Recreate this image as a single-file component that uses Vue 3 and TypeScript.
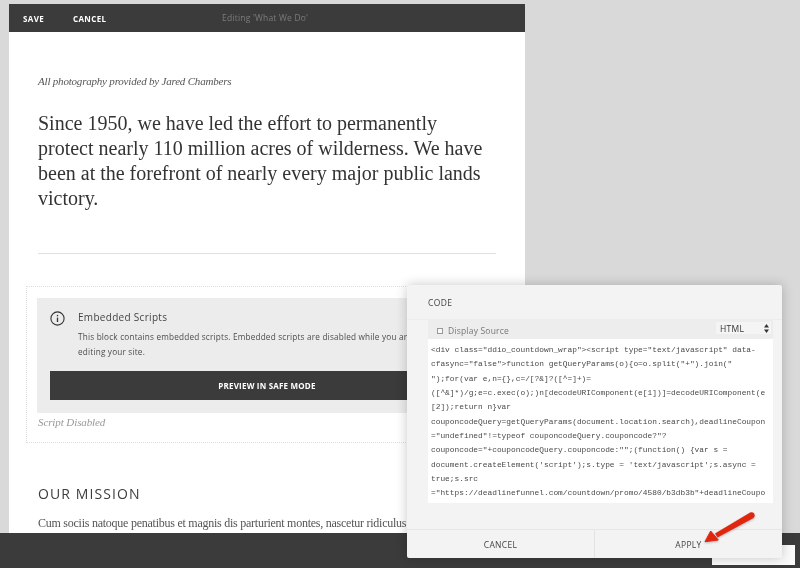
<script setup lang="ts">
const codeLines: string[] = [
  '<div class="ddio_countdown_wrap"><script type="text/javascript" data-',
  'cfasync="false">function getQueryParams(o){o=o.split("+").join("',
  '");for(var e,n={},c=/[?&]?([^=]+)=',
  '([^&]*)/g;e=c.exec(o);)n[decodeURIComponent(e[1])]=decodeURIComponent(e',
  '[2]);return n}var',
  'couponcodeQuery=getQueryParams(document.location.search),deadlineCoupon',
  '="undefined"!=typeof couponcodeQuery.couponcode?"?',
  'couponcode="+couponcodeQuery.couponcode:"";(function() {var s =',
  "document.createElement('script');s.type = 'text/javascript';s.async =",
  'true;s.src',
  '="https://deadlinefunnel.com/countdown/promo/4580/b3db3b"+deadlineCoupo',
]
</script>

<template>
  <div class="screen">
    <main class="column">
      <header class="topbar">
        <div class="top-actions">
          <span>SAVE</span>
          <span>CANCEL</span>
        </div>
        <span class="top-title">Editing 'What We Do'</span>
      </header>
      <section class="content">
        <p class="credit">All photography provided by Jared Chambers</p>
        <h1 class="lead">Since 1950, we have led the effort to permanently<br />protect nearly 110 million acres of wilderness. We have<br />been at the forefront of nearly every major public lands<br />victory.</h1>
        <hr class="rule" />
      </section>
      <section class="embed">
        <div class="notice">
          <div class="notice-head">
            <svg class="info" width="15" height="15" viewBox="0 0 15 15" fill="none" stroke="#333" aria-hidden="true">
              <circle cx="7.5" cy="7.5" r="6.6" stroke-width="1.1" />
              <path d="M7.5 6.6v4.4" stroke-width="1.3" />
              <path d="M7.5 3.9v1.4" stroke-width="1.3" />
            </svg>
            <div class="notice-text">
              <div class="notice-title">Embedded Scripts</div>
              <p>This block contains embedded scripts. Embedded scripts are disabled while you are<br />editing your site.</p>
            </div>
          </div>
          <div class="preview">PREVIEW IN SAFE MODE</div>
        </div>
        <div class="caption">Script Disabled</div>
      </section>
      <section class="mission">
        <h2>OUR MISSION</h2>
        <p>Cum sociis natoque penatibus et magnis dis parturient montes, nascetur ridiculus mus.</p>
      </section>
    </main>

    <footer class="bottombar">
      <div class="ghost-button"></div>
    </footer>

    <aside class="modal">
      <div class="modal-head">CODE</div>
      <div class="modal-body">
        <div class="toolbar">
          <label class="source"><span class="check"></span>Display Source</label>
          <div class="select">
            <span>HTML</span>
            <svg width="5" height="9" viewBox="0 0 5 9" fill="#333" aria-hidden="true">
              <path d="M2.5 0 5 3.4H0z" />
              <path d="M2.5 9 0 5.6h5z" />
            </svg>
          </div>
        </div>
        <div class="code">
          <div v-for="(line, i) in codeLines" :key="i" class="code-line">{{ line }}</div>
        </div>
      </div>
      <div class="modal-foot">
        <div class="foot-btn cancel">CANCEL</div>
        <div class="foot-btn apply">APPLY</div>
      </div>
    </aside>

    <svg class="arrow" width="70" height="50" viewBox="0 0 70 50" aria-hidden="true">
      <path d="M53.2 5.6C55.4 4.6 57.6 6 57.6 8.2 57.6 10 56.6 11 55.2 11.8L20.5 30.6 18 26.5z" fill="#e0260f" />
      <path d="M13.7 24 8 34.7 21.3 33z" fill="#e0260f" stroke="#e0260f" stroke-width="1" stroke-linejoin="round" />
    </svg>
  </div>
</template>

<style>
html, body { margin: 0; padding: 0; background: #d9d9d9; }
</style>

<style scoped>
.screen {
  position: relative;
  width: 800px;
  height: 568px;
  overflow: hidden;
  background: #d9d9d9;
  font-family: "Open Sans", "Liberation Sans", sans-serif;
  filter: blur(0.35px);
}
.column {
  width: 516px;
  height: 564px;
  margin: 4px 0 0 9px;
  background: #fff;
  overflow: hidden;
}
.topbar {
  position: relative;
  display: flex;
  align-items: center;
  height: 28px;
  padding-left: 14px;
  background: #3b3b3b;
}
.top-actions {
  display: flex;
  gap: 29px;
  color: #fff;
  font-size: 8px;
  font-weight: 700;
  letter-spacing: 0.35px;
}
.top-title {
  position: absolute;
  left: 213px;
  top: 8px;
  color: #7c7c7c;
  font-size: 8.5px;
  letter-spacing: 0.2px;
}
.content { padding: 41px 29px 0; }
.credit {
  margin: 0;
  font: italic 11px/16px "Liberation Serif", serif;
  letter-spacing: -0.2px;
  color: #555;
}
.lead {
  margin: 22px 0 0;
  font: 400 20px/25px "Liberation Serif", serif;
  color: #333;
}
.rule {
  margin: 42px 0 0;
  border: 0;
  border-top: 1px solid #e0e0e0;
}
.embed {
  margin: 32px 17px 0;
  padding: 11px 10px 0;
  height: 144px;
  border: 1px dotted #ddd;
}
.notice {
  height: 115px;
  padding: 13px 13px 0;
  box-sizing: border-box;
  background: #ececec;
}
.notice-head { display: flex; gap: 13px; }
.info { flex: none; }
.notice-text { flex: 1; }
.notice-title {
  font-size: 10px;
  line-height: 13px;
  color: #444;
  letter-spacing: 0.3px;
}
.notice-text p {
  margin: 6px 0 0;
  font-size: 8.2px;
  line-height: 14.5px;
  color: #4c4c4c;
  letter-spacing: 0.2px;
  white-space: nowrap;
}
.preview {
  margin-top: 12px;
  height: 29px;
  line-height: 29px;
  text-align: center;
  background: #3b3b3b;
  color: #fff;
  font-size: 8px;
  font-weight: 700;
  letter-spacing: 0.2px;
}
.caption {
  margin-top: 1px;
  margin-left: 1px;
  font: italic 11px/16px "Liberation Serif", serif;
  letter-spacing: -0.1px;
  color: #999;
}
.mission { padding: 42px 29px 0; }
.mission h2 {
  margin: 0;
  font-size: 14px;
  line-height: 18px;
  font-weight: 400;
  letter-spacing: 1.1px;
  color: #3d3d3d;
}
.mission p {
  margin: 11px 0 0;
  white-space: nowrap;
  font: 12px/18px "Liberation Serif", serif;
  letter-spacing: -0.25px;
  color: #555;
}
.bottombar {
  position: absolute;
  left: 0;
  right: 0;
  bottom: 0;
  height: 35px;
  background: #3b3b3b;
}
.ghost-button {
  position: absolute;
  right: 5px;
  bottom: 3px;
  width: 83px;
  height: 20px;
  background: #fafafa;
}
.modal {
  position: absolute;
  left: 407px;
  top: 285px;
  width: 375px;
  height: 273px;
  display: flex;
  flex-direction: column;
  background: #f3f3f3;
  border-radius: 2px;
  box-shadow: 0 0 12px rgba(0, 0, 0, 0.22);
}
.modal-head {
  height: 35px;
  box-sizing: border-box;
  padding: 12px 0 0 21px;
  font-size: 8.5px;
  line-height: 12px;
  letter-spacing: 0.4px;
  color: #444;
  border-bottom: 1px solid #ececec;
}
.modal-body { flex: 1; padding: 0 9px 0 21px; }
.toolbar {
  display: flex;
  justify-content: space-between;
  height: 19px;
  padding: 2px 2px 0 9px;
  box-sizing: border-box;
  background: #ededed;
}
.source {
  display: flex;
  align-items: center;
  gap: 5px;
  height: 17px;
  font-size: 8.5px;
  color: #777;
  letter-spacing: 0.2px;
}
.check {
  width: 6px;
  height: 6px;
  box-sizing: border-box;
  border: 1px solid #999;
  background: #f8f8f8;
}
.select {
  display: flex;
  justify-content: space-between;
  align-items: center;
  width: 55px;
  height: 12px;
  padding: 0 2px 0 4px;
  box-sizing: border-box;
  background: #f4f4f4;
  font-size: 8.5px;
  color: #333;
  letter-spacing: 0.3px;
}
.code {
  height: 164px;
  padding: 4px 0 0 3px;
  box-sizing: border-box;
  background: #fff;
  overflow: hidden;
}
.code-line {
  white-space: pre;
  font: 7.85px/14.35px "Liberation Mono", monospace;
  color: #4a4a4a;
}
.modal-foot {
  display: flex;
  height: 28px;
  border-top: 1px solid #e6e6e6;
}
.foot-btn {
  display: flex;
  align-items: center;
  justify-content: center;
  font-size: 8.5px;
  letter-spacing: 0.3px;
  color: #444;
}
.cancel { width: 187px; border-right: 1px solid #e2e2e2; }
.apply { flex: 1; }
.arrow {
  position: absolute;
  left: 697px;
  top: 507px;
  filter: drop-shadow(0 1px 1px rgba(0, 0, 0, 0.25));
}
</style>
